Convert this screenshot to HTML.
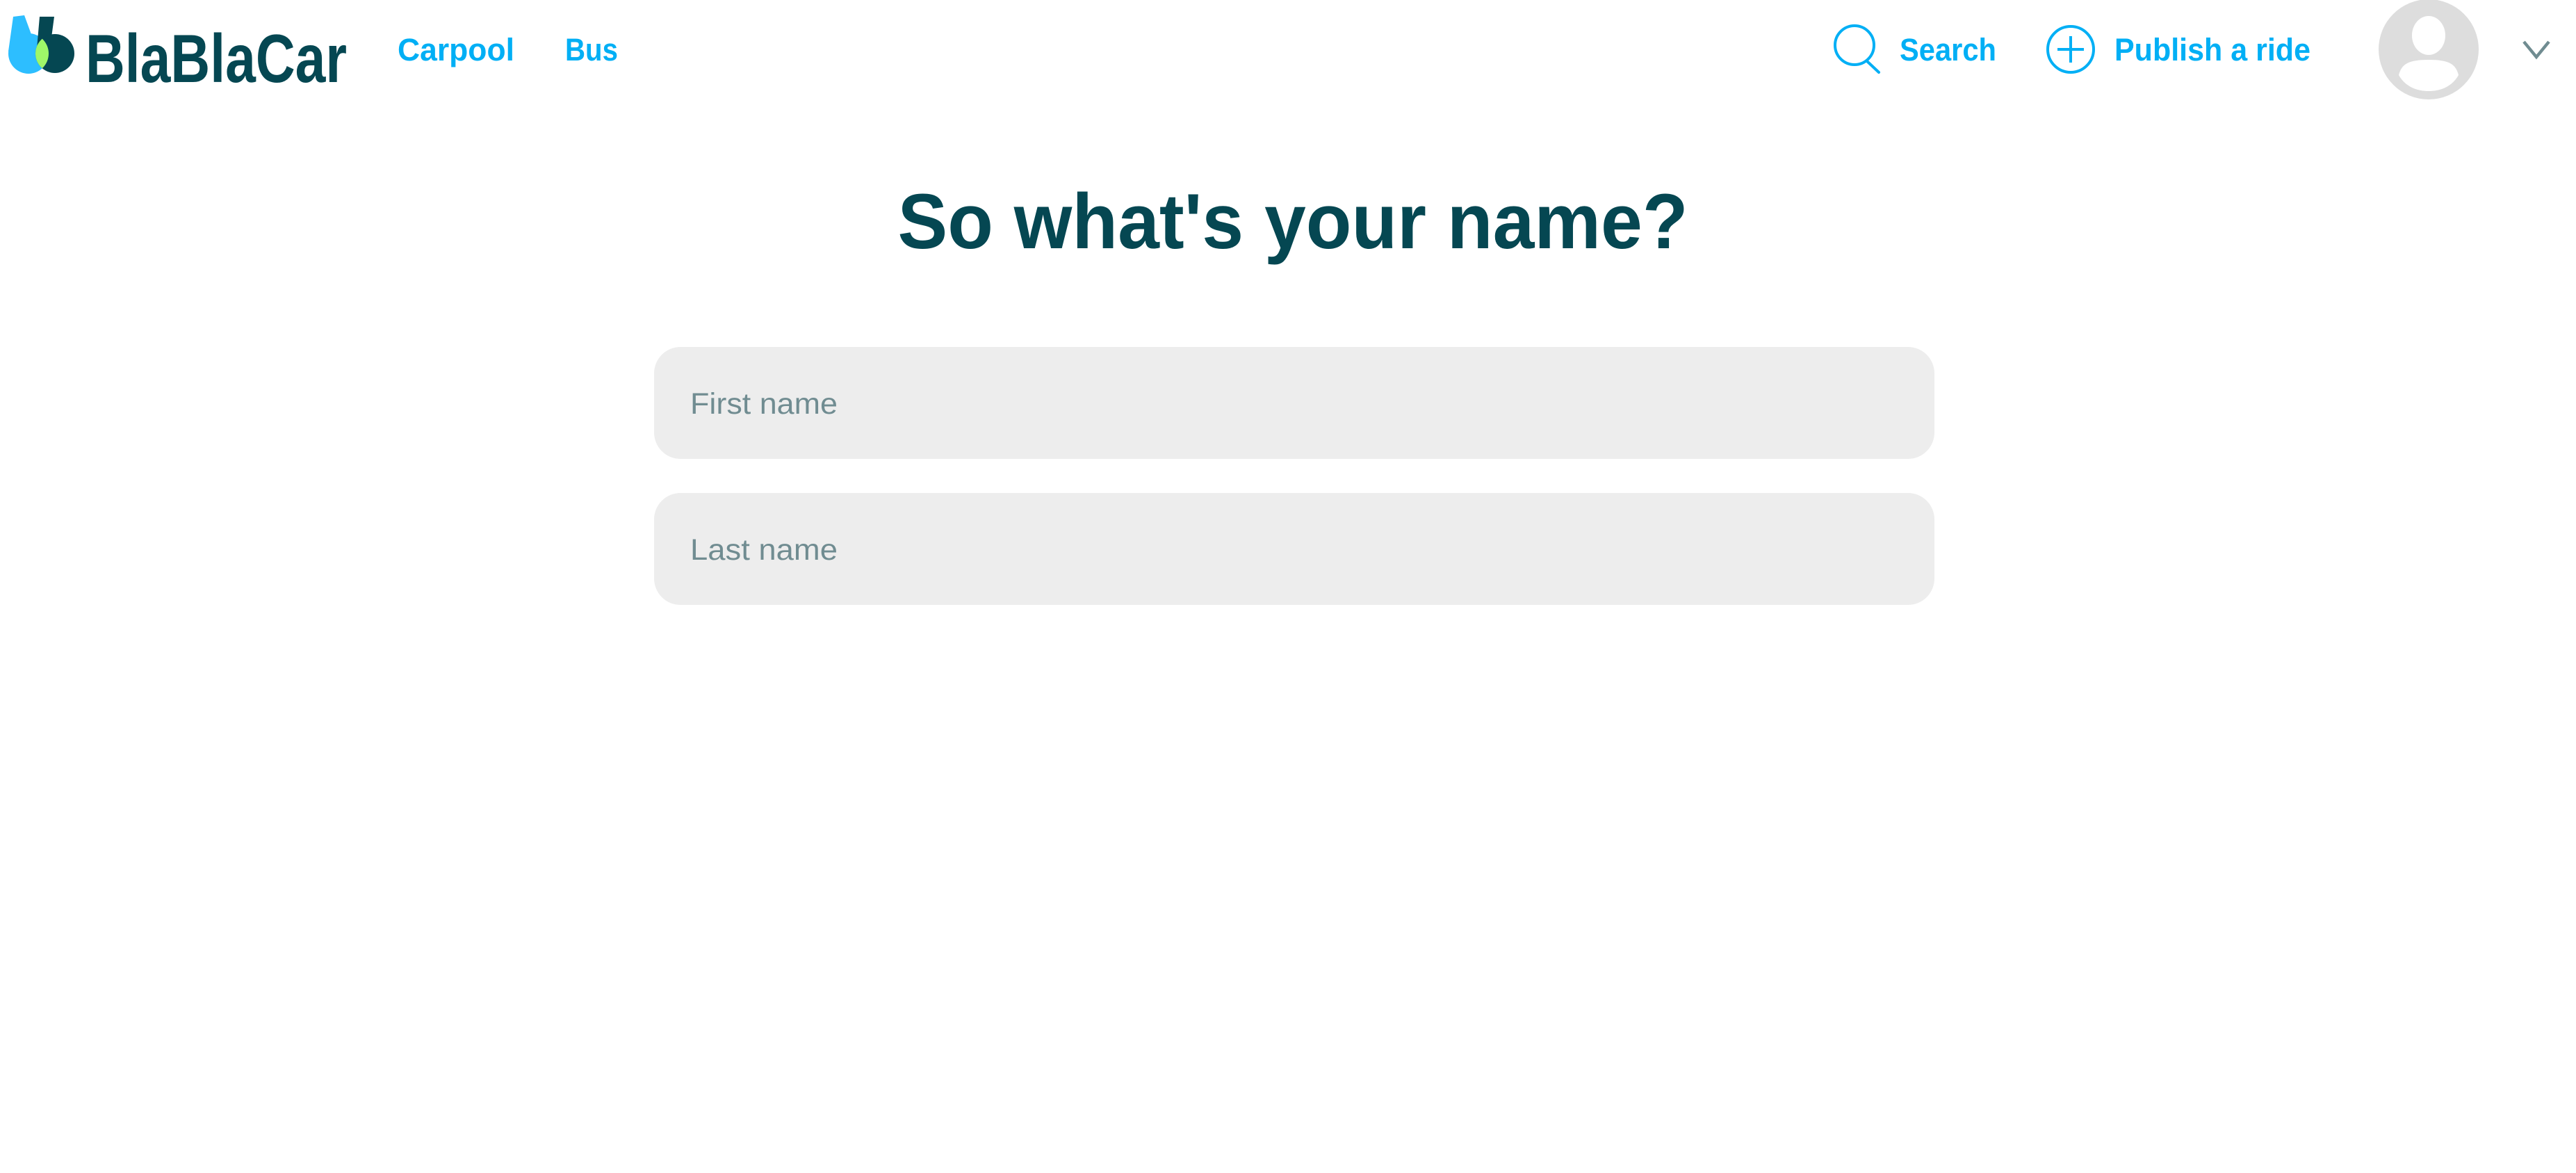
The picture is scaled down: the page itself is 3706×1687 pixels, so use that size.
<!DOCTYPE html>
<html><head><meta charset="utf-8"><style>
html,body{margin:0;padding:0;background:#fff;width:3706px;height:1687px;overflow:hidden}
svg{display:block}
text{font-family:"Liberation Sans",sans-serif}
</style></head><body>
<svg width="3706" height="1687" viewBox="0 0 3706 1687" xmlns="http://www.w3.org/2000/svg">
<defs>
<clipPath id="lb"><circle cx="41" cy="77" r="29"/><path d="M19,24 L35,22 L46,52 L12,74 Z"/></clipPath>
</defs>
<path d="M19,24 L35,22 L46,52 L12,74 Z" fill="#2DBEFF"/>
<circle cx="41" cy="77" r="29" fill="#2DBEFF"/>
<path d="M57,24 L78,24 L74,54 L53,70 Z" fill="#054752"/>
<circle cx="79" cy="77" r="28" fill="#054752"/>
<g clip-path="url(#lb)"><circle cx="79" cy="77" r="28" fill="#9EF769"/></g>
<text x="123" y="118" font-size="98" font-weight="bold" fill="#054752" textLength="376" lengthAdjust="spacingAndGlyphs">BlaBlaCar</text>
<text x="572" y="87" font-size="45" font-weight="bold" fill="#00AFF5" textLength="168" lengthAdjust="spacingAndGlyphs">Carpool</text>
<text x="813" y="87" font-size="45" font-weight="bold" fill="#00AFF5" textLength="76" lengthAdjust="spacingAndGlyphs">Bus</text>
<circle cx="2668" cy="65" r="28" fill="none" stroke="#00AFF5" stroke-width="4"/>
<line x1="2686" y1="88" x2="2703" y2="104" stroke="#00AFF5" stroke-width="4" stroke-linecap="round"/>
<text x="2733" y="87" font-size="45" font-weight="bold" fill="#00AFF5" textLength="139" lengthAdjust="spacingAndGlyphs">Search</text>
<circle cx="2979" cy="71" r="33" fill="none" stroke="#00AFF5" stroke-width="4"/>
<line x1="2979" y1="52" x2="2979" y2="90" stroke="#00AFF5" stroke-width="4"/>
<line x1="2960" y1="71" x2="2998" y2="71" stroke="#00AFF5" stroke-width="4"/>
<text x="3042" y="87" font-size="45" font-weight="bold" fill="#00AFF5" textLength="282" lengthAdjust="spacingAndGlyphs">Publish a ride</text>
<circle cx="3494" cy="71" r="72" fill="#DDDDDD"/>
<ellipse cx="3494" cy="51" rx="24" ry="28" fill="#fff"/>
<path d="M3451,108 C3455,92 3465,86 3494,86 C3523,86 3533,92 3537,108 C3528,124 3512,131 3494,131 C3476,131 3460,124 3451,108 Z" fill="#fff"/>
<path d="M3631,60 L3649,82 L3667,60" fill="none" stroke="#708C91" stroke-width="4.5"/>
<text x="1860" y="357" font-size="112" font-weight="bold" fill="#054752" text-anchor="middle" textLength="1137" lengthAdjust="spacingAndGlyphs">So what's your name?</text>
<rect x="941" y="499" width="1842" height="161" rx="38" fill="#EDEDED"/>
<text x="993" y="595" font-size="43" fill="#708C91" textLength="212" lengthAdjust="spacingAndGlyphs">First name</text>
<rect x="941" y="709" width="1842" height="161" rx="38" fill="#EDEDED"/>
<text x="993" y="805" font-size="43" fill="#708C91" textLength="212" lengthAdjust="spacingAndGlyphs">Last name</text>
</svg>
</body></html>
